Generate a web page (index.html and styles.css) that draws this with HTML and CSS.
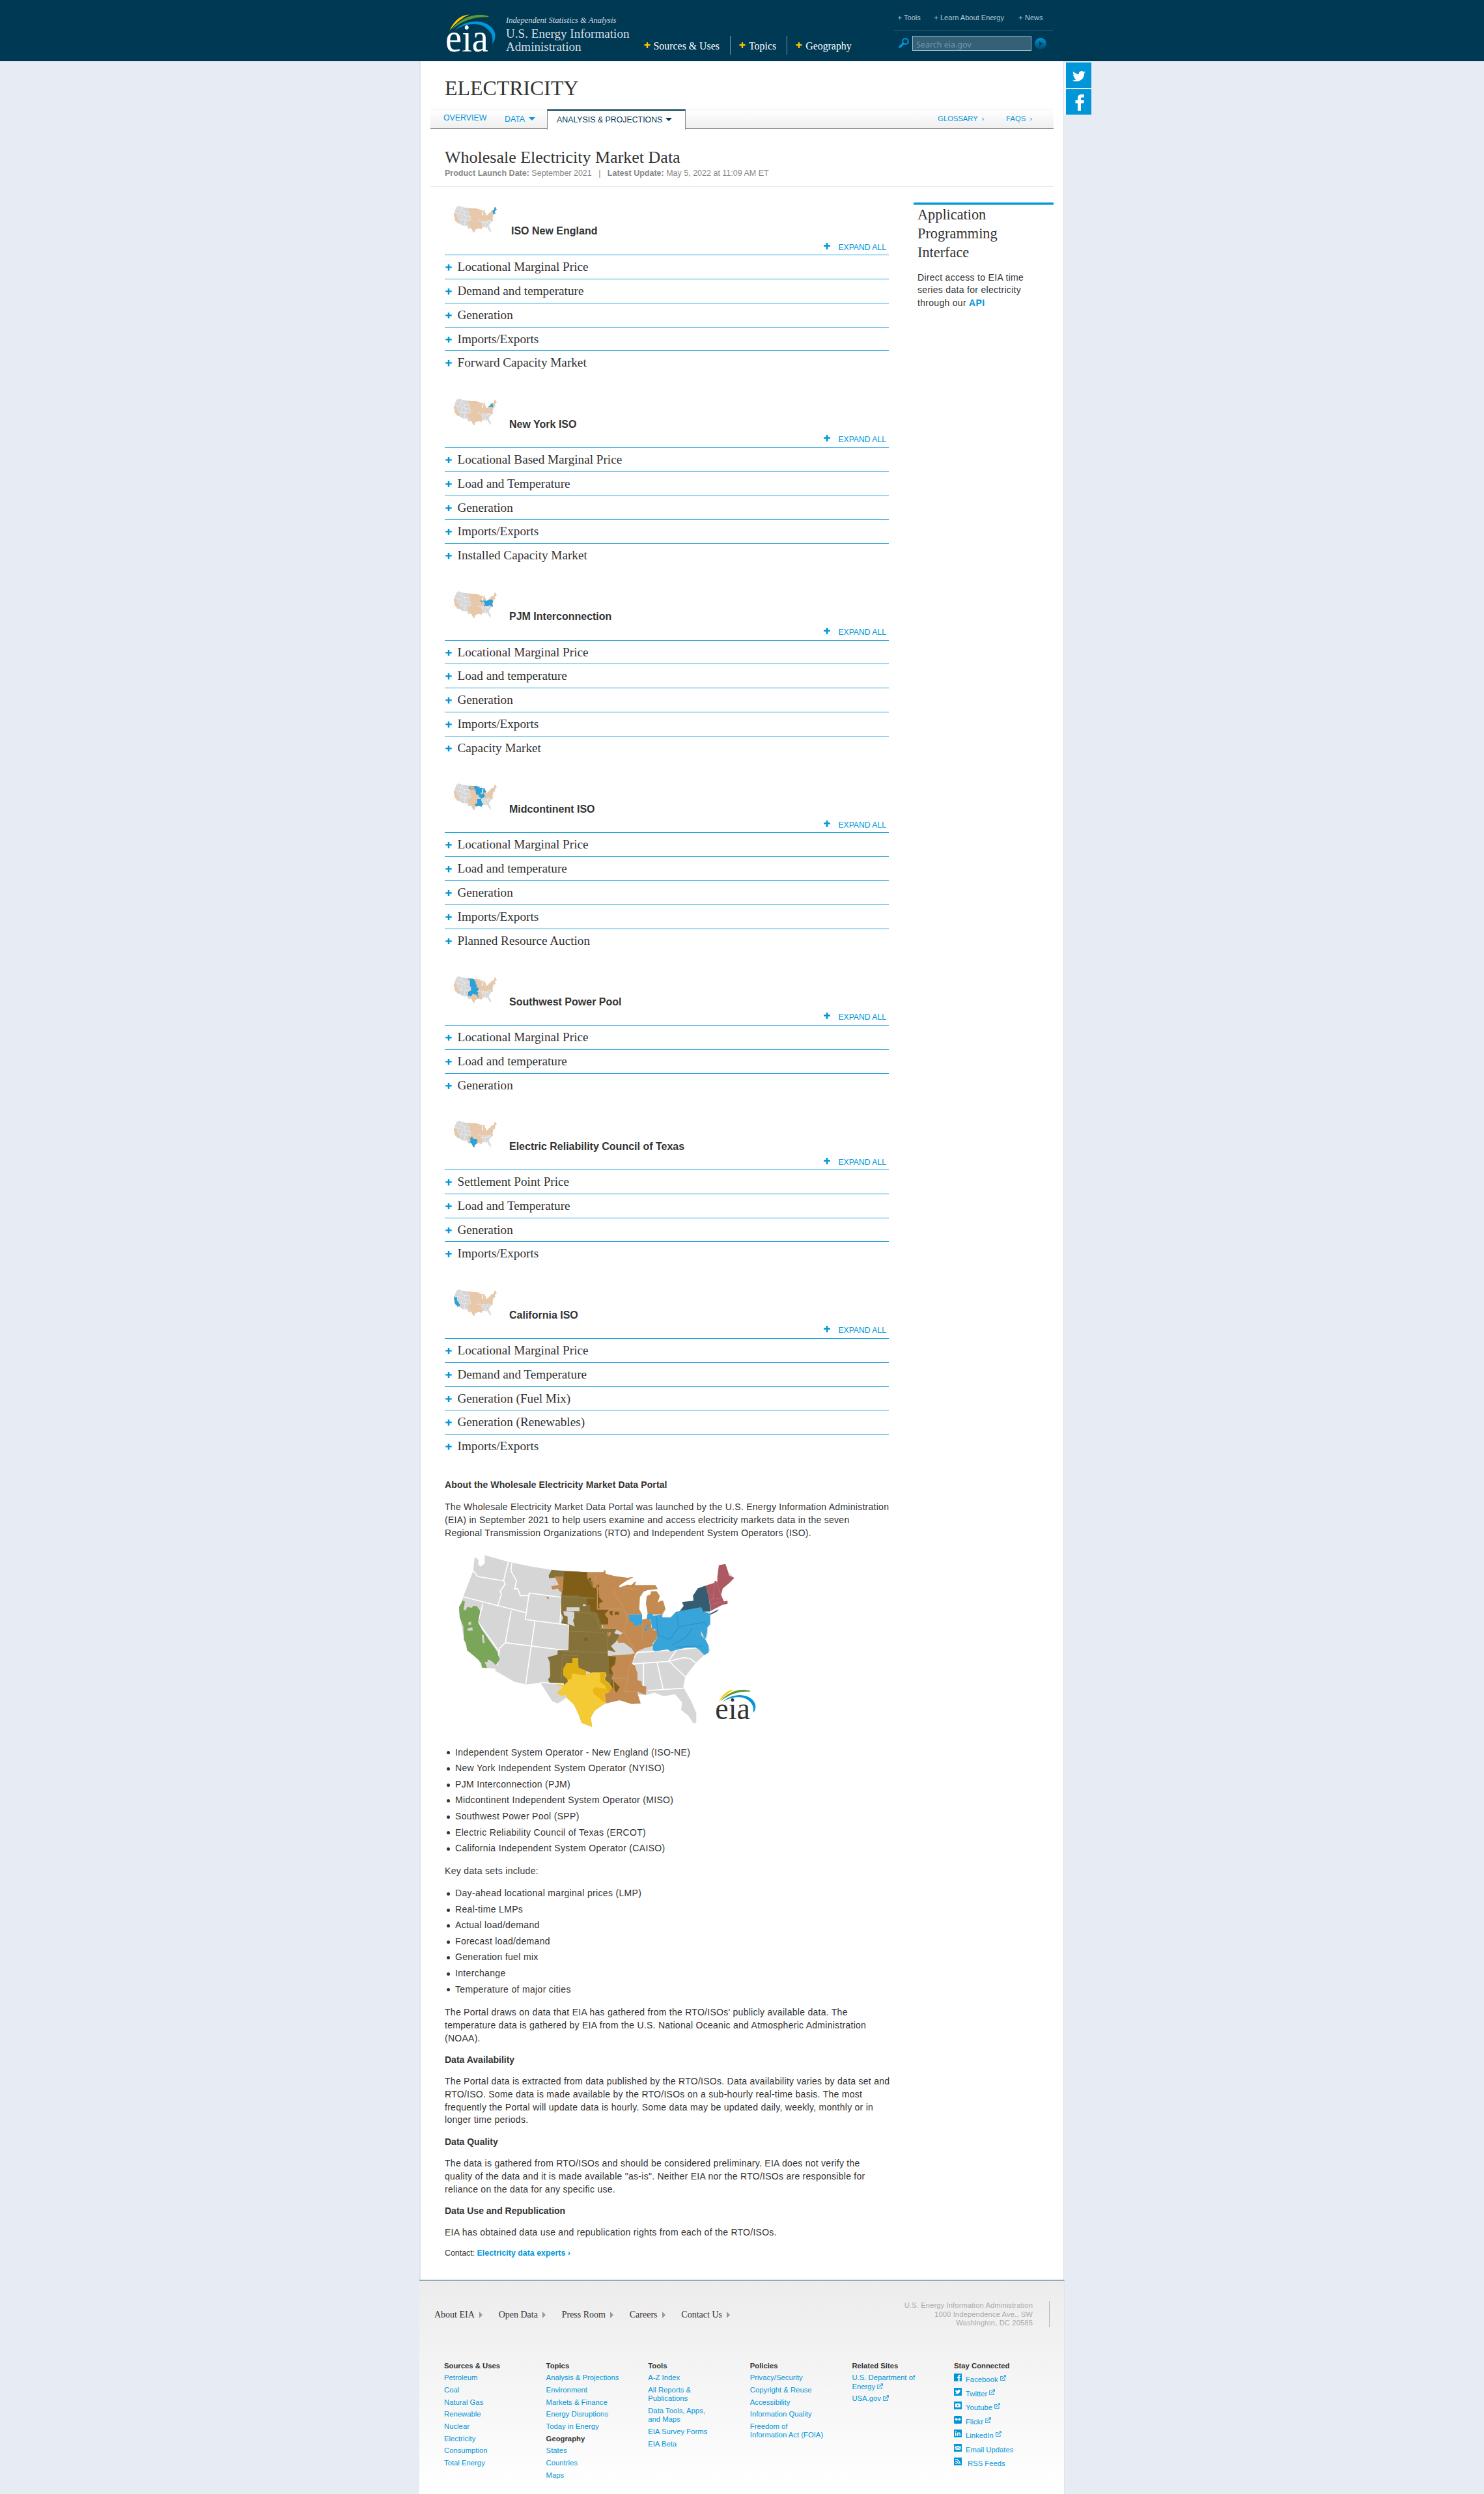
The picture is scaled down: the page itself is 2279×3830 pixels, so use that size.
FILE: index.html
```html
<!DOCTYPE html>
<html lang="en">
<head>
<meta charset="utf-8">
<title>Wholesale Electricity Market Data</title>
<link rel="stylesheet" href="styles.css">
</head>
<body>
<svg class="defs" aria-hidden="true">
<defs>
<path id="us" d="M147 60L165 74L163 92L172 104L184 98L193 88L193 52L300 82L400 103L500 119L665 130L742 130L742 121L750 124L750 137L790 148L850 156L880 152L845 170L812 193L815 200L850 188L868 190L890 170L885 190L910 195L935 190L980 190L990 208L945 212L925 220L908 245L905 300L920 347L940 342L944 310L936 275L940 240L958 232L960 218L985 218L1000 240L990 270L1005 262L1015 262L1026 300L1010 337L1050 338L1095 308L1110 285L1102 268L1155 262L1153 238L1175 205L1210 193L1250 178L1265 170L1272 98L1302 92L1315 130L1343 157L1320 180L1290 205L1282 235L1295 265L1312 270L1285 282L1232 308L1232 322L1232 370L1222 385L1218 435L1210 440L1222 470L1232 490L1205 512L1165 548L1117 612L1108 660L1145 725L1168 780L1168 822L1155 827L1130 790L1098 765L1102 730L1070 692L1018 702L975 685L937 695L890 695L912 735L870 737L815 720L750 735L700 768L682 800L688 843L640 825L625 785L605 742L570 708L530 735L505 725L450 640L385 647L330 635L240 583L245 575L182 570L165 535L112 490L95 420L75 310L95 240L140 125Z"/>
<path id="lines" d="M140 122L160 150L280 170L302 82M280 170L288 184L264 218L270 232L252 288M92 243L380 316M185 275L163 360L262 500M318 88L314 125L340 170L330 208L345 205L357 238L398 238L398 226L547 246M398 226L380 348L582 374L578 490M315 308L288 455L262 480L250 560M288 455L578 492M424 358L382 645M547 246L540 368M450 638L575 648M760 515L882 510L900 500L1075 488L1200 475M872 553L1040 541L1110 524L1140 528L1165 548M1040 541L1075 490M1045 543L1117 612M925 553L925 680M988 548L1015 670M885 556L872 553L890 500M945 675L1108 665"/>
<path id="ca" d="M92 260L102 266L95 303L106 306L112 290L135 294L140 284L158 288L172 308L163 360L180 395L250 495L262 532L245 558L225 540L208 532L205 545L192 543L205 572L180 570L178 550L165 535L140 512L112 490L108 462L97 440L95 380L78 340L75 290Z"/>
<path id="miso" d="M515 150L665 130L742 130L742 121L750 124L750 137L790 148L850 156L880 152L845 170L812 193L815 200L850 188L868 190L890 170L885 190L980 190L990 208L945 212L925 220L908 245L905 300L918 325L855 326L862 350L885 365L885 380L918 370L920 347L950 345L960 360L960 385L975 400L988 392L990 430L965 460L968 470L930 480L895 495L885 510L872 553L885 560L897 598L897 628L915 632L918 652L938 658L935 695L895 682L912 735L870 737L815 720L750 735L692 690L692 660L745 660L760 600L765 515L885 505L868 480L835 455L808 455L800 430L830 410L800 395L740 388L700 250L556 240L553 200L540 220L530 205L505 210L500 195L535 190ZM958 232L960 218L985 218L1000 240L990 270L1005 262L1015 262L1026 300L1010 325L945 325L936 275L940 240Z"/>
<path id="spp" d="M502 119L562 125L665 130L665 160L690 175L692 206L718 212L718 245L738 265L715 270L720 300L765 302L745 325L762 345L762 370L730 372L735 390L800 392L790 412L815 418L798 450L775 470L798 500L765 490L763 515L798 520L795 555L775 570L785 600L775 625L815 660L800 685L775 655L755 640L735 595L700 600L660 585L625 580L600 620L575 655L558 655L558 642L492 640L485 625L495 610L493 545L483 522L528 510L530 490L578 490L582 372L545 365L555 340L545 320L545 260L553 150L490 158L488 145Z"/>
<path id="ercot" d="M598 525L622 525L625 570L660 585L660 600L690 592L750 592L755 605L745 625L765 640L780 660L765 685L745 690L752 730L700 768L682 800L688 843L640 825L625 785L605 742L570 708L565 692L550 702L525 685L553 660L518 645L560 648L575 635L575 620L555 605L555 575L570 550L598 550Z"/>
<path id="pjm" d="M855 326L918 325L918 370L885 380L880 362L862 355ZM942 325L965 320L968 332L1010 325L1012 338L1050 338L1075 312L1190 292L1200 312L1232 322L1232 370L1218 385L1218 405L1208 440L1190 400L1190 420L1213 445L1225 470L1225 500L1205 512L1180 485L1165 478L1120 478L1050 495L1035 485L980 495L968 490L968 465L990 430L985 395L965 392L958 350L940 345ZM930 388h12v12h-12zM938 374h10v9h-10z"/>
<path id="ny" d="M1092 310L1110 285L1102 268L1155 262L1153 238L1175 205L1212 192L1225 245L1234 310L1200 312L1190 292ZM1230 322L1272 300L1262 312L1234 326Z"/>
<path id="ne" d="M1212 192L1250 180L1254 170L1265 175L1265 150L1272 98L1302 92L1315 130L1318 145L1343 157L1320 180L1290 205L1282 235L1295 265L1312 262L1312 275L1285 282L1236 308L1225 245Z"/>
<g id="base"><use href="#us" fill="#d6d6d6"/><use href="#lines" fill="none" stroke="#f4f4f4" stroke-width="12"/><g fill="#e8c8a9"><use href="#ca"/><use href="#miso"/><use href="#spp"/><use href="#ercot"/><use href="#pjm"/><use href="#ny"/><use href="#ne"/></g></g>
<g id="swoosh"><path fill="#ffc702" d="M6.500 25C13 9 25 .5 37 .5C27 4 16 13 6.500 25Z"/><path fill="#5d9732" d="M10 23C22 6 46-4 67 3L65 4.500C48 3 28 8 10 23Z"/><path fill="#0096d7" d="M14 24C24 15 36 10.700 49 11C66 12 77 23 76.500 33C76.500 38 75 42 72 45C73 38 73 31 66 24C55 12 35 12 14 24Z"/></g>
<g id="ext" fill="none" stroke="#3aa9dd" stroke-width="1.200"><path d="M4 2.500H.7V8.500H7V5.500M3 6L8 1.500M5.500 .8H8.500V4"/></g>
<path id="plus" d="M3.700 0H6.300V3.300H10V5.700H6.300V10H3.700V5.700H0V3.300H3.700Z"/>
<path id="bird" d="M20 3c-.8.4-1.500.6-2.300.7.8-.5 1.400-1.300 1.700-2.200-.8.500-1.600.8-2.500 1A4.100 4.100 0 0 0 9.900 6.200C6.500 6 3.500 4.400 1.400 1.800.3 3.700.9 6 2.700 7.200c-.6 0-1.300-.2-1.800-.5 0 2 1.400 3.600 3.300 4-.6.200-1.200.2-1.900.1.500 1.600 2 2.800 3.800 2.800C4.400 15 2.200 15.600 0 15.400c6 3.700 18 1.300 18-10.300C18.800 4.500 19.500 3.800 20 3z"/>
<linearGradient id="go" x2="0" y2="1"><stop offset="0" stop-color="#0096d7"/><stop offset="1" stop-color="#00486b"/></linearGradient>
</defs>
</svg>

<header class="top">
  <div class="top-in">
    <svg class="logo" viewBox="0 0 77 58"><use href="#swoosh"/><text x="0" y="56.500" textLength="66" lengthAdjust="spacingAndGlyphs" fill="#fff">eia</text></svg>
    <div class="org"><i>Independent Statistics &amp; Analysis</i><span>U.S. Energy Information</span><span class="adm">Administration</span></div>
    <nav class="nav">
      <a><svg viewBox="0 0 10 10"><use href="#plus"/></svg><span>Sources &amp; Uses</span></a>
      <a><svg viewBox="0 0 10 10"><use href="#plus"/></svg><span>Topics</span></a>
      <a><svg viewBox="0 0 10 10"><use href="#plus"/></svg><span>Geography</span></a>
    </nav>
    <div class="util">
      <div class="links"><a>+ <span>Tools</span></a><a>+ <span>Learn About Energy</span></a><a>+ <span>News</span></a></div>
      <div class="search">
        <svg class="mag" viewBox="0 0 16 16"><circle cx="10.500" cy="5.500" r="4.300" fill="none" stroke="#0096d7" stroke-width="2"/><path d="M7 9L2 14" stroke="#0096d7" stroke-width="3.500" stroke-linecap="round"/></svg>
        <div class="box"><span>Search eia.gov</span></div>
        <svg class="go" viewBox="0 0 18 18"><circle cx="9" cy="9" r="9" fill="url(#go)"/><path d="M7 5L12 9L7 13Z" fill="#003953"/></svg>
      </div>
    </div>
  </div>
</header>

<div class="wrap">
<main class="page">
  <h1><span>ELECTRICITY</span></h1>
  <div class="tabs">
    <a class="ov"><span>OVERVIEW</span></a>
    <a class="da"><span>DATA</span> <i class="tri"></i></a>
    <a class="an"><span>ANALYSIS &amp; PROJECTIONS</span> <i class="tri"></i></a>
    <a class="gl"><span>GLOSSARY</span> <b>›</b></a>
    <a class="fq"><span>FAQS</span> <b>›</b></a>
  </div>
  <div class="title">
    <h2><span>Wholesale Electricity Market Data</span></h2>
    <p><span><b>Product Launch Date:</b> September 2021 &nbsp; | &nbsp; <b>Latest Update:</b> May 5, 2022 at 11:09 AM ET</span></p>
  </div>
  <div class="cols">
    <div class="main">
      <section class="group first">
        <div class="head"><svg viewBox="75 52 1268 791" preserveAspectRatio="none"><use href="#base"/><use href="#ne"/></svg><h3><span>ISO New England</span></h3><a class="exp"><svg viewBox="0 0 10 10"><use href="#plus"/></svg><span>EXPAND ALL</span></a></div>
        <ul><li><svg viewBox="0 0 10 10"><use href="#plus"/></svg><span>Locational Marginal Price</span></li><li><svg viewBox="0 0 10 10"><use href="#plus"/></svg><span>Demand and temperature</span></li><li><svg viewBox="0 0 10 10"><use href="#plus"/></svg><span>Generation</span></li><li><svg viewBox="0 0 10 10"><use href="#plus"/></svg><span>Imports/Exports</span></li><li><svg viewBox="0 0 10 10"><use href="#plus"/></svg><span>Forward Capacity Market</span></li></ul>
      </section>
      <section class="group">
        <div class="head"><svg viewBox="75 52 1268 791" preserveAspectRatio="none"><use href="#base"/><use href="#ny"/></svg><h3><span>New York ISO</span></h3><a class="exp"><svg viewBox="0 0 10 10"><use href="#plus"/></svg><span>EXPAND ALL</span></a></div>
        <ul><li><svg viewBox="0 0 10 10"><use href="#plus"/></svg><span>Locational Based Marginal Price</span></li><li><svg viewBox="0 0 10 10"><use href="#plus"/></svg><span>Load and Temperature</span></li><li><svg viewBox="0 0 10 10"><use href="#plus"/></svg><span>Generation</span></li><li><svg viewBox="0 0 10 10"><use href="#plus"/></svg><span>Imports/Exports</span></li><li><svg viewBox="0 0 10 10"><use href="#plus"/></svg><span>Installed Capacity Market</span></li></ul>
      </section>
      <section class="group">
        <div class="head"><svg viewBox="75 52 1268 791" preserveAspectRatio="none"><use href="#base"/><use href="#pjm"/></svg><h3><span>PJM Interconnection</span></h3><a class="exp"><svg viewBox="0 0 10 10"><use href="#plus"/></svg><span>EXPAND ALL</span></a></div>
        <ul><li><svg viewBox="0 0 10 10"><use href="#plus"/></svg><span>Locational Marginal Price</span></li><li><svg viewBox="0 0 10 10"><use href="#plus"/></svg><span>Load and temperature</span></li><li><svg viewBox="0 0 10 10"><use href="#plus"/></svg><span>Generation</span></li><li><svg viewBox="0 0 10 10"><use href="#plus"/></svg><span>Imports/Exports</span></li><li><svg viewBox="0 0 10 10"><use href="#plus"/></svg><span>Capacity Market</span></li></ul>
      </section>
      <section class="group">
        <div class="head"><svg viewBox="75 52 1268 791" preserveAspectRatio="none"><use href="#base"/><use href="#miso"/><path d="M556 240L556 130L665 130L690 206L718 245L738 388L700 250Z" fill="#b9b69c"/></svg><h3><span>Midcontinent ISO</span></h3><a class="exp"><svg viewBox="0 0 10 10"><use href="#plus"/></svg><span>EXPAND ALL</span></a></div>
        <ul><li><svg viewBox="0 0 10 10"><use href="#plus"/></svg><span>Locational Marginal Price</span></li><li><svg viewBox="0 0 10 10"><use href="#plus"/></svg><span>Load and temperature</span></li><li><svg viewBox="0 0 10 10"><use href="#plus"/></svg><span>Generation</span></li><li><svg viewBox="0 0 10 10"><use href="#plus"/></svg><span>Imports/Exports</span></li><li><svg viewBox="0 0 10 10"><use href="#plus"/></svg><span>Planned Resource Auction</span></li></ul>
      </section>
      <section class="group">
        <div class="head"><svg viewBox="75 52 1268 791" preserveAspectRatio="none"><use href="#base"/><use href="#spp"/></svg><h3><span>Southwest Power Pool</span></h3><a class="exp"><svg viewBox="0 0 10 10"><use href="#plus"/></svg><span>EXPAND ALL</span></a></div>
        <ul><li><svg viewBox="0 0 10 10"><use href="#plus"/></svg><span>Locational Marginal Price</span></li><li><svg viewBox="0 0 10 10"><use href="#plus"/></svg><span>Load and temperature</span></li><li><svg viewBox="0 0 10 10"><use href="#plus"/></svg><span>Generation</span></li></ul>
      </section>
      <section class="group">
        <div class="head"><svg viewBox="75 52 1268 791" preserveAspectRatio="none"><use href="#base"/><use href="#ercot"/></svg><h3><span>Electric Reliability Council of Texas</span></h3><a class="exp"><svg viewBox="0 0 10 10"><use href="#plus"/></svg><span>EXPAND ALL</span></a></div>
        <ul><li><svg viewBox="0 0 10 10"><use href="#plus"/></svg><span>Settlement Point Price</span></li><li><svg viewBox="0 0 10 10"><use href="#plus"/></svg><span>Load and Temperature</span></li><li><svg viewBox="0 0 10 10"><use href="#plus"/></svg><span>Generation</span></li><li><svg viewBox="0 0 10 10"><use href="#plus"/></svg><span>Imports/Exports</span></li></ul>
      </section>
      <section class="group">
        <div class="head"><svg viewBox="75 52 1268 791" preserveAspectRatio="none"><use href="#base"/><use href="#ca"/></svg><h3><span>California ISO</span></h3><a class="exp"><svg viewBox="0 0 10 10"><use href="#plus"/></svg><span>EXPAND ALL</span></a></div>
        <ul><li><svg viewBox="0 0 10 10"><use href="#plus"/></svg><span>Locational Marginal Price</span></li><li><svg viewBox="0 0 10 10"><use href="#plus"/></svg><span>Demand and Temperature</span></li><li><svg viewBox="0 0 10 10"><use href="#plus"/></svg><span>Generation (Fuel Mix)</span></li><li><svg viewBox="0 0 10 10"><use href="#plus"/></svg><span>Generation (Renewables)</span></li><li><svg viewBox="0 0 10 10"><use href="#plus"/></svg><span>Imports/Exports</span></li></ul>
      </section>

      <article class="about">
        <h4>About the Wholesale Electricity Market Data Portal</h4>
        <p>The Wholesale Electricity Market Data Portal was launched by the U.S. Energy Information Administration<br>(EIA) in September 2021 to help users examine and access electricity markets data in the seven<br>Regional Transmission Organizations (RTO) and Independent System Operators (ISO).</p>
        <svg class="bigmap" viewBox="0 0 1560 900">
          <use href="#us" fill="#d6d6d6"/>
          <use href="#lines" fill="none" stroke="#fff" stroke-width="5"/>
          <use href="#ca" fill="#7aa65a"/>
          <path fill="#d6d6d6" d="M118 362L130 358L130 372L118 372ZM114 390L136 384L138 398L114 400ZM180 420L188 418L193 458L184 455Z"/>
          <use href="#miso" fill="#c38b52"/>
          <use href="#spp" fill="#85713a"/>
          <path fill="#c38b52" d="M515 150L556 150L553 215L543 222L530 205L505 210L500 195L535 188L530 170ZM478 242L488 245L488 255L480 252ZM756 408L775 405L773 420L762 428Z"/>
          <path fill="#805e17" d="M560 126L665 130L665 160L690 200L715 206L720 245L738 265L720 275L722 300L765 302L745 325L762 345L762 370L730 370L712 318L680 308L680 282L665 280L665 248L632 248L628 238L552 238ZM672 156h12v12h-12zM706 188h14v14h-14zM768 310L782 308L782 330L770 325ZM792 312h20v14h-20zM652 432h14v14h-14zM765 520L795 520L790 555L775 570L785 600L765 600ZM778 622L815 660L800 685L775 655Z"/>
          <path fill="#d6d6d6" d="M570 292h60v18h-60zM556 310L606 312L606 340L600 352L608 380L575 368L575 335L558 328ZM760 490L795 500L798 488L778 475L805 460L838 460L842 475L870 480L872 508L760 514ZM645 278h14v8h-14z"/>
          <path fill="none" stroke="#c9955f" stroke-width="4" d="M698 132L712 200L712 300L832 300M832 300L852 326M790 210L800 250L835 290M822 200L905 210M725 388L800 388M780 618L852 618L855 575L880 525M852 618L840 680L910 680M785 618L790 690M838 305L850 360L832 400L885 490M920 350L920 440"/>
          <path fill="none" stroke="#907d47" stroke-width="4" d="M545 240L700 250M605 312L700 322L725 388M582 402L740 408L758 430L758 515M552 495L758 500M545 640L552 510L622 515L625 572"/>
          <use href="#ercot" fill="#f4ca35"/>
          <path fill="#e0b012" d="M598 525L622 525L625 570L660 585L660 605L595 598L592 625L575 625L555 605L555 575L570 550L598 550ZM725 592L752 595L745 625L780 660L765 685L745 650L725 635Z"/>
          <path fill="#edb518" d="M692 670L705 660L755 668L765 685L742 692L750 730L735 722L695 690Z"/>
          <use href="#pjm" fill="#37a4da"/>
          <path fill="none" stroke="#2c95cb" stroke-width="4" d="M1075 315L1088 382L1205 360L1215 378M985 335L990 420L1045 440L1075 400L1088 382M1050 470L1120 430L1150 388M1070 475L1200 470"/>
          <use href="#ny" fill="#345d72"/>
          <use href="#ne" fill="#ae5961"/>
          <path fill="none" stroke="#b96b72" stroke-width="4" d="M1254 172L1245 250M1262 178L1282 240M1228 255L1280 250M1230 280L1285 268"/>
          <g transform="translate(1255 670) scale(2.430 2.400)"><use href="#swoosh"/><text x="0" y="56.500" textLength="66" lengthAdjust="spacingAndGlyphs" fill="#333">eia</text></g>
        </svg>
        <ul><li>Independent System Operator - New England (ISO-NE)</li><li>New York Independent System Operator (NYISO)</li><li>PJM Interconnection (PJM)</li><li>Midcontinent Independent System Operator (MISO)</li><li>Southwest Power Pool (SPP)</li><li>Electric Reliability Council of Texas (ERCOT)</li><li>California Independent System Operator (CAISO)</li></ul>
        <p class="key">Key data sets include:</p>
        <ul><li>Day-ahead locational marginal prices (LMP)</li><li>Real-time LMPs</li><li>Actual load/demand</li><li>Forecast load/demand</li><li>Generation fuel mix</li><li>Interchange</li><li>Temperature of major cities</li></ul>
        <p class="after-list">The Portal draws on data that EIA has gathered from the RTO/ISOs' publicly available data. The<br>temperature data is gathered by EIA from the U.S. National Oceanic and Atmospheric Administration<br>(NOAA).</p>
        <h4>Data Availability</h4>
        <p>The Portal data is extracted from data published by the RTO/ISOs. Data availability varies by data set and<br>RTO/ISO. Some data is made available by the RTO/ISOs on a sub-hourly real-time basis. The most<br>frequently the Portal will update data is hourly. Some data may be updated daily, weekly, monthly or in<br>longer time periods.</p>
        <h4>Data Quality</h4>
        <p>The data is gathered from RTO/ISOs and should be considered preliminary. EIA does not verify the<br>quality of the data and it is made available "as-is". Neither EIA nor the RTO/ISOs are responsible for<br>reliance on the data for any specific use.</p>
        <h4>Data Use and Republication</h4>
        <p>EIA has obtained data use and republication rights from each of the RTO/ISOs.</p>
        <p class="contact">Contact: <b>Electricity data experts ›</b></p>
      </article>
    </div>
    <aside class="side">
      <h3>Application<br>Programming<br>Interface</h3>
      <p>Direct access to EIA time<br>series data for electricity<br>through our <b>API</b></p>
    </aside>
  </div>
</main>
<div class="social">
  <a><svg viewBox="0 0 39 39"><use href="#bird" transform="translate(10 12)"/></svg></a>
  <a><svg viewBox="0 0 39 39"><path d="M18 33V21.500H14.500V17H18V14C18 10 20 8 24 8H28V12.500H25C23.500 12.500 23 13.200 23 14.500V17H27.800L27.200 21.500H23V33Z"/></svg></a>
</div>
</div>

<footer class="foot">
  <div class="row">
    <nav><a><span>About EIA</span><i></i></a><a><span>Open Data</span><i></i></a><a><span>Press Room</span><i></i></a><a><span>Careers</span><i></i></a><a><span>Contact Us</span><i></i></a></nav>
    <address>U.S. Energy Information Administration<br>1000 Independence Ave., SW<br>Washington, DC 20585</address>
  </div>
  <div class="grid">
    <div><h5>Sources &amp; Uses</h5><a>Petroleum</a><a>Coal</a><a>Natural Gas</a><a>Renewable</a><a>Nuclear</a><a>Electricity</a><a>Consumption</a><a>Total Energy</a></div>
    <div><h5>Topics</h5><a>Analysis &amp; Projections</a><a>Environment</a><a>Markets &amp; Finance</a><a>Energy Disruptions</a><a>Today in Energy</a><h5>Geography</h5><a>States</a><a>Countries</a><a>Maps</a></div>
    <div><h5>Tools</h5><a>A-Z Index</a><a>All Reports &amp;<br>Publications</a><a>Data Tools, Apps,<br>and Maps</a><a>EIA Survey Forms</a><a>EIA Beta</a></div>
    <div><h5>Policies</h5><a>Privacy/Security</a><a>Copyright &amp; Reuse</a><a>Accessibility</a><a>Information Quality</a><a>Freedom of<br>Information Act (FOIA)</a></div>
    <div><h5>Related Sites</h5><a>U.S. Department of<br>Energy <svg class="ext" viewBox="0 0 9 9"><use href="#ext"/></svg></a><a>USA.gov <svg class="ext" viewBox="0 0 9 9"><use href="#ext"/></svg></a></div>
    <div class="stay"><h5>Stay Connected</h5>
      <a><svg viewBox="0 0 12 12"><path d="M0 0H12V12H0Z"/><path fill="#fff" d="M6.500 12V7H5V5H6.500C6.300 2.500 7.500 1.500 10 1.800V3.500C8.800 3.400 8.500 3.700 8.600 5H10L9.800 7H8.600V12Z"/></svg>Facebook<svg class="ext" viewBox="0 0 9 9"><use href="#ext"/></svg></a>
      <a><svg viewBox="0 0 12 12"><path d="M0 0H12V12H0Z"/><use href="#bird" fill="#fff" transform="translate(1.800 2) scale(.42)"/></svg>Twitter<svg class="ext" viewBox="0 0 9 9"><use href="#ext"/></svg></a>
      <a><svg viewBox="0 0 12 12"><path d="M0 0H12V12H0Z"/><rect x="2" y="3" width="8" height="6" rx="1" fill="#fff"/><path d="M5 4.500L7.500 6L5 7.500Z"/></svg>Youtube<svg class="ext" viewBox="0 0 9 9"><use href="#ext"/></svg></a>
      <a><svg viewBox="0 0 12 12"><rect width="12" height="12" rx="1.500"/><circle cx="3.700" cy="5.300" r="1.900" fill="#fff"/><circle cx="8.300" cy="5.300" r="1.900" fill="#fff"/></svg>Flickr<svg class="ext" viewBox="0 0 9 9"><use href="#ext"/></svg></a>
      <a><svg viewBox="0 0 12 12"><path d="M0 0H12V12H0Z"/><path fill="#fff" d="M2 4.500H3.500V10H2ZM2 2H3.500V3.500H2ZM5 4.500H6.500V5.200C7.500 4 10 4 10 6.500V10H8.500V7C8.500 5.500 6.500 5.500 6.500 7V10H5Z"/></svg>LinkedIn<svg class="ext" viewBox="0 0 9 9"><use href="#ext"/></svg></a>
      <a><svg viewBox="0 0 12 12"><path d="M0 0H12V12H0Z"/><path fill="#fff" d="M1.500 3H10.500V9H1.500Z"/><path fill="none" stroke="#0096d7" stroke-width=".9" d="M1.500 3L6 6.500L10.500 3M1.500 9L4.500 5.800M10.500 9L7.500 5.800"/></svg>Email Updates</a>
      <a class="rss"><svg viewBox="0 0 12 12"><path d="M0 0H12V12H0Z"/><circle cx="3.200" cy="8.800" r="1.100" fill="#fff"/><path fill="none" stroke="#fff" stroke-width="1.300" d="M2 5.500A4.500 4.500 0 0 1 6.500 10M2 2.700A7.300 7.300 0 0 1 9.300 10"/></svg>RSS Feeds</a>
    </div>
  </div>
</footer>
</body>
</html>
```
FILE: styles.css
```css
* { box-sizing: border-box; }
body { margin: 0; background: #e7ebf4; font: 14px/19.65px "Liberation Sans", Arial, sans-serif; color: #333; }
h1, h2, h3, h4, h5, p, ul { margin: 0; padding: 0; font-weight: normal; list-style: none; }
a { color: #0096d7; text-decoration: none; }
svg { display: block; flex: none; }
.defs { position: absolute; width: 0; height: 0; }
span { white-space: nowrap; }

/* Site header */
.top { height: 94px; background: #003953; }
.top-in { width: 936px; margin-left: 684px; display: flex; }
.logo { width: 77px; height: 58px; margin-top: 22px; overflow: visible; }
svg text { font: 61px "Liberation Serif", serif; }
.org { width: 200px; margin: 23px 0 0 16px; display: flex; flex-direction: column; font: 19.1px/20px "Liberation Serif", serif; color: #d3dde4; white-space: nowrap; }
.org i { font-size: 12.6px; line-height: 16px; margin-bottom: 3.200px; }
.nav { display: flex; margin: 55px 0 0 11.500px; font: 15.9px/29px "Liberation Serif", serif; }
.nav a { height: 29px; display: flex; color: #fff; padding-right: 16px; margin-right: 13px; border-right: 1px solid #7d96a5; line-height: 32px; }
.nav a:last-child { border: 0; margin: 0; }
.nav svg { width: 10px; height: 9px; margin: 10px 5px 0 0; fill: #ffc702; }
.util { width: 244px; margin-left: auto; padding-top: 18px; margin-right: 3px; }
.links { height: 29px; border-bottom: 1px solid #24556e; display: flex; gap: 20.500px; padding-left: 5.600px; font-size: 11.1px; line-height: 18px; }
.links a { color: #b4cddb; }
.links a:last-child { margin-left: 1.800px; }
.search { display: flex; padding: 8px 0 0 7px; }
.mag { width: 16px; height: 16px; margin-top: 3px; }
.box { width: 183px; height: 23px; margin: 0 5px; background: #366075; border: 1px solid #9dbfd2; padding-left: 5px; font: 12.5px/25px "Noto Sans", sans-serif; color: #6b9ab5; }
.go { width: 18px; height: 18px; margin-top: 3px; }

/* Section title and tabs */
.wrap { display: flex; height: 3407px; margin-left: 644px; }
.page { width: 990px; background: #fff; border-left: 2px solid #dfe3e8; border-right: 1px solid #dfe3e8; }
.page h1 { font: 31.9px/40px "Liberation Serif", serif; padding: 21.500px 0 0 37px; height: 73px; }
.tabs { height: 31px; margin: 0 15px; border-top: 1px solid #ebebeb; border-bottom: 1px solid #878787; background: linear-gradient(#fff, #efefef); display: flex; font-size: 12.35px; line-height: 17px; white-space: nowrap; }
.tri { display: inline-block; border: 5px solid transparent; border-top-color: #0096d7; border-bottom: 0; vertical-align: 2px; margin-left: 3px; }
.ov { padding: 5px 0 0 20px; width: 114px; }
.da { padding-top: 7px; width: 65px; }
.an { width: 213px; height: 31px; padding: 6px 0 0 14px; background: #fff; border: 1px solid #878787; border-top: 2px solid #003953; border-bottom: 0; color: #003953; }
.an .tri { border-top-color: #003953; margin-left: 1px; }
.gl { margin-left: auto; padding-top: 6px; font-size: 11.2px; }
.fq { padding: 6px 33px 0 34px; font-size: 11.2px; }
.gl b, .fq b { font-weight: normal; margin-left: 3px; }
.title { height: 89px; margin: 0 15px; padding: 29px 0 0 22px; border-bottom: 1px solid #e9e9e9; }
.title h2 { font: 26px/30px "Liberation Serif", serif; }
.title p { font-size: 12.5px; line-height: 18px; color: #888; }

/* Market accordions */
.cols { display: flex; }
.main { width: 682px; margin-left: 37px; }
.head { height: 111.7px; display: flex; align-items: flex-end; }
.first .head { height: 104.3px; }
.head > svg { width: 66px; height: 41px; margin: 0 0 34px 14px; fill: #2ba0da; }
.head h3 { font-size: 16px; font-weight: bold; line-height: 20px; margin: 0 0 25.400px 19px; }
.first h3 { margin: 0 0 26px 22px; }
.exp { margin: 0 4px 2.500px auto; display: flex; font-size: 12.2px; line-height: 18px; }
.exp svg { width: 10px; height: 10px; margin: 2px 12px 0 0; fill: #0096d7; }
.group li { height: 36.8px; border-top: 1px solid #22a1db; display: flex; font: 19.2px/35px "Liberation Serif", serif; }
.group li svg { width: 10px; height: 9.500px; margin: 14px 8.500px 0 1px; fill: #0096d7; }

/* About text */
.about { padding-top: 32px; white-space: nowrap; letter-spacing: .27px; }
.about h4 { font-size: 14px; font-weight: bold; line-height: 19.65px; letter-spacing: 0; }
.about h4:first-child { margin-bottom: 14.700px; letter-spacing: .11px; }
.about p { margin: 13.500px 0 14px; }
.bigmap { width: 520px; height: 300px; margin: -6.800px 0 0 -3px; letter-spacing: 0; }
.about ul { padding-top: 10.100px; letter-spacing: .33px; }
.about li { line-height: 19.65px; margin-bottom: 4.950px; padding-left: 16px; display: flex; align-items: center; }
.about li::before { content: ""; width: 5px; height: 5px; border-radius: 50%; background: #333; margin: 1px 8px 0 -13px; }
.about .key { margin: 15.300px 0 4.300px; letter-spacing: .32px; }
.about .after-list { margin-top: 16px; }
.about .contact { font-size: 12.4px; margin-top: -2px; letter-spacing: 0; }
.contact b { color: #0096d7; }

/* Sidebar and share buttons */
.side { width: 215px; height: 160px; margin: 24px 0 0 38px; border-top: 3px solid #0096d7; padding: 2px 6px; box-shadow: inset 0 1px #7fcbec; }
.side h3 { font: 22.3px/28.9px "Liberation Serif", serif; }
.side p { margin-top: 14px; white-space: nowrap; letter-spacing: .3px; }
.side b { color: #0096d7; }
.social { margin: 2px 0 0; border-left: 3px solid #f5f6f9; height: 80px; display: flex; flex-direction: column; gap: 2px; }
.social a { width: 39px; height: 39px; background: #0096d7; }
.social svg { fill: #fff; }

/* Footer */
.foot { width: 991px; height: 329px; margin-left: 644px; border-top: 1px solid #003953; background: linear-gradient(#ececec, #fff); border-right: 1px solid #dfe3ee; }
.row { display: flex; height: 111px; }
.foot nav { display: flex; align-items: flex-start; gap: 24.800px; padding: 42.500px 0 0 23px; font: 14px/20px "Liberation Serif", serif; }
.foot nav a { color: #333; display: flex; align-items: center; }
.foot nav i { border: 5px solid transparent; border-left-color: #999; border-right: 0; margin-left: 7px; }
.foot address { margin: 32px 22px 0 auto; height: 40px; padding-right: 25px; border-right: 1px solid #b5b5b5; font: 11.2px/13.6px "Liberation Sans", sans-serif; letter-spacing: .12px; color: #aaa; text-align: right; }
.grid { display: grid; grid-template-columns: repeat(5, 156.6px) 1fr; padding: 13.800px 0 0 38px; font-size: 11.3px; line-height: 13.3px; }
.grid a, .grid h5 { display: block; margin-bottom: 5.350px; font-size: 11.3px; white-space: nowrap; }
.grid h5 { font-weight: bold; }
.grid .ext { display: inline-block; width: 9px; height: 9px; }
.grid .stay a { display: flex; height: 13px; margin-bottom: 8.500px; line-height: 18px; fill: #0096d7; }
.stay a svg:first-child { width: 12px; height: 12px; margin-right: 6px; }
.stay .ext { margin: 2px 0 0 3px; }
.stay .rss svg:first-child { margin-right: 9px; }
```
